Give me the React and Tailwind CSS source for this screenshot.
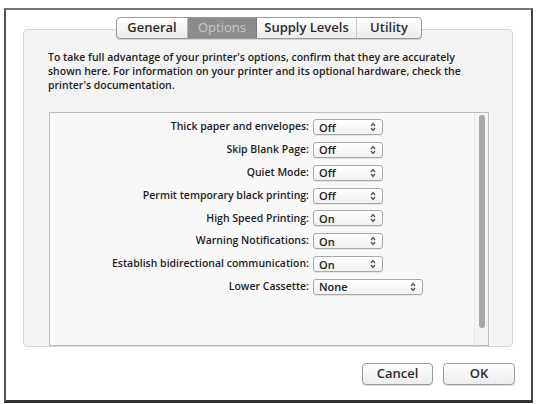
import React from "react";

const rows = [
  ["Thick paper and envelopes:", "Off", false],
  ["Skip Blank Page:", "Off", false],
  ["Quiet Mode:", "Off", false],
  ["Permit temporary black printing:", "Off", false],
  ["High Speed Printing:", "On", false],
  ["Warning Notifications:", "On", false],
  ["Establish bidirectional communication:", "On", false],
  ["Lower Cassette:", "None", true],
];

function Arrows() {
  return (
    <svg width="6" height="10" viewBox="0 0 6 10" className="shrink-0">
      <path d="M1 4 L3 1.5 L5 4" fill="none" stroke="#555" strokeWidth="1.3" />
      <path d="M1 6 L3 8.5 L5 6" fill="none" stroke="#555" strokeWidth="1.3" />
    </svg>
  );
}

function Popup({ value, wide }) {
  return (
    <div
      className={`flex items-center justify-between h-[16px] rounded-[3px] border border-[#a9a9a9] bg-gradient-to-b from-white to-[#f1f1f1] pl-[5px] pr-[6px] shadow-[0_1px_0_rgba(0,0,0,0.08)] ${
        wide ? "w-[110px]" : "w-[70px]"
      }`}
    >
      <span className="text-[11px] leading-none text-[#222] font-semibold">{value}</span>
      <Arrows />
    </div>
  );
}

export default function App() {
  return (
    <div
      className="w-[537px] h-[404px] bg-white pt-[8px] pl-[4px] overflow-hidden"
      style={{ fontFamily: '"Open Sans", "DejaVu Sans", sans-serif' }}
    >
      <div className="w-[529px] h-[395px] border-l-2 border-t-2 border-r-2 border-b-[3px] border-l-[#555] border-t-[#777] border-r-[#444] border-b-[#333] bg-white pt-[19px] pl-[17px] flex flex-col">
        {/* Group box */}
        <div className="w-[490px] h-[318px] rounded-[4px] border border-[#d6d6d6] bg-[#f3f3f3] flex flex-col">
          {/* Tabs */}
          <div className="flex justify-center -mt-[13px] pl-[2px]">
            <div className="flex h-[22px] rounded-[4px] border border-[#9a9a9a] bg-gradient-to-b from-white to-[#ececec] overflow-hidden shadow-[0_1px_1px_rgba(0,0,0,0.15)]">
              <div className="w-[71px] flex items-center justify-center text-[13px] font-semibold text-[#2b2b2b] border-r border-[#b5b5b5]">
                General
              </div>
              <div className="w-[69px] flex items-center justify-center text-[13px] font-medium text-[#c9c9c9] bg-[#8c8c8c] border-r border-[#7a7a7a]">
                Options
              </div>
              <div className="w-[100px] flex items-center justify-center text-[13px] font-semibold text-[#2b2b2b] border-r border-[#c8c8c8]">
                Supply Levels
              </div>
              <div className="w-[64px] flex items-center justify-center text-[13px] font-semibold text-[#2b2b2b]">
                Utility
              </div>
            </div>
          </div>

          {/* Description */}
          <p className="mt-[11px] pl-[24px] text-[10.5px] leading-[14px] font-semibold text-[#1e1e1e] whitespace-nowrap">
            To take full advantage of your printer's options, confirm that they are accurately
            <br />
            shown here. For information on your printer and its optional hardware, check the
            <br />
            printer's documentation.
          </p>

          {/* List box */}
          <div className="mt-[20px] ml-[25px] w-[440px] h-[234px] border border-[#bdbdbd] bg-[#f8f8f8] flex">
            <div className="flex-1 pt-[6px] flex flex-col gap-[6.85px]">
              {rows.map(([label, value, wide]) => (
                <div key={label} className="flex items-center h-[16px]">
                  <div className="w-[263px] text-right text-[10.5px] font-semibold text-[#1e1e1e] pr-[4px] whitespace-nowrap">
                    {label}
                  </div>
                  <Popup value={value} wide={wide} />
                </div>
              ))}
            </div>
            <div className="w-[14px] border-l border-[#e6e6e6] bg-[#f4f4f4] flex justify-center pt-[2px]">
              <div className="w-[6px] h-[213px] rounded-full bg-[#a8a8a8]" />
            </div>
          </div>
        </div>

        {/* Buttons */}
        <div className="mt-[16px] flex gap-[10px] pl-[339px]">
          <button className="w-[71px] h-[22px] rounded-[4px] border border-[#9d9d9d] bg-gradient-to-b from-white to-[#ececec] text-[13px] font-semibold text-[#2b2b2b] shadow-[0_1px_1px_rgba(0,0,0,0.15)]">
            Cancel
          </button>
          <button className="w-[72px] h-[22px] rounded-[4px] border border-[#9d9d9d] bg-gradient-to-b from-white to-[#ececec] text-[13px] font-semibold text-[#2b2b2b] shadow-[0_1px_1px_rgba(0,0,0,0.15)]">
            OK
          </button>
        </div>
      </div>
    </div>
  );
}
